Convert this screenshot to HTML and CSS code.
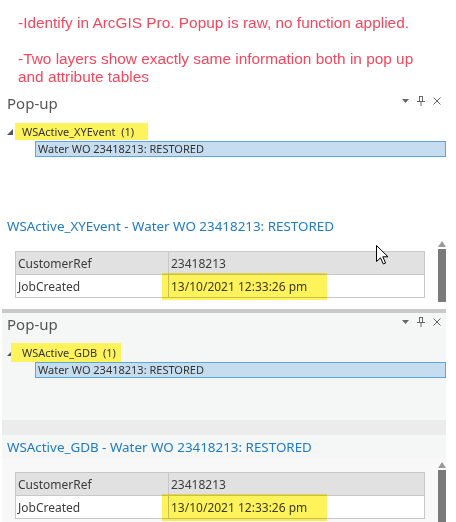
FILE: index.html
```html
<!DOCTYPE html>
<html lang="en">
<head>
    <meta charset="UTF-8">
    <title>Pop-up - WSActive layers</title>
    <link rel="stylesheet" href="styles.css">
</head>
<body>
    <div class="note">
        <p>-Identify in ArcGIS Pro. Popup is raw, no function applied.</p>
        <p>-Two layers show exactly same information both in pop up and attribute tables</p>
    </div>

    <!-- first layer: XY event layer -->
    <section class="pane">
        <div class="pane-head">
            <span class="pane-title">Pop-up</span>
            <span class="pane-tools">
                <svg width="7" height="4" viewBox="0 0 7 4"><path d="M0 0H7L3.5 4Z" fill="#666"/></svg>
                <svg width="8" height="10" viewBox="0 0 8 10"><path d="M2.5 0V5M5.5 0V5M2.5 0.5H5.5M0 5.5H8M4 5.5V10" stroke="#666" fill="none"/></svg>
                <svg width="8" height="8" viewBox="0 0 8 8"><path d="M0.5 0.5L7.5 7.5M7.5 0.5L0.5 7.5" stroke="#666" fill="none"/></svg>
            </span>
        </div>
        <div class="tree">
            <div class="tree-layer">
                <svg class="tree-toggle" width="6" height="6" viewBox="0 0 6 6"><path d="M6 0V6H0Z" fill="#555"/></svg>
                <span class="hl hl-xy">WSActive_XYEvent  (1)</span>
            </div>
            <div class="tree-feature">Water WO 23418213: RESTORED</div>
        </div>
    </section>
    <section class="detail">
        <div class="detail-band"></div>
        <div class="detail-title">WSActive_XYEvent - Water WO 23418213: RESTORED</div>
        <div class="detail-body">
            <div class="attr-wrap">
                <table class="attrs">
                    <tr class="head"><td class="key">CustomerRef</td><td>23418213</td></tr>
                    <tr><td class="key">JobCreated</td><td>13/10/2021 12:33:26 pm</td></tr>
                </table>
                <span class="mark"></span>
            </div>
            <div class="scrollbar"><svg width="8" height="6" viewBox="0 0 8 6"><path d="M4 0L8 6H0Z" fill="#999"/></svg><span class="thumb"></span></div>
            <svg class="cursor" width="13" height="20" viewBox="0 0 13 20"><path d="M0.5 0.5V16.5L4.5 12.8L7.3 19L9.6 18L6.8 11.8H12Z" fill="#fff" stroke="#000" stroke-linejoin="round"/></svg>
        </div>
    </section>

    <!-- second layer: geodatabase layer -->
    <section class="pane inactive">
        <div class="pane-head">
            <span class="pane-title">Pop-up</span>
            <span class="pane-tools">
                <svg width="7" height="4" viewBox="0 0 7 4"><path d="M0 0H7L3.5 4Z" fill="#666"/></svg>
                <svg width="8" height="10" viewBox="0 0 8 10"><path d="M2.5 0V5M5.5 0V5M2.5 0.5H5.5M0 5.5H8M4 5.5V10" stroke="#666" fill="none"/></svg>
                <svg width="8" height="8" viewBox="0 0 8 8"><path d="M0.5 0.5L7.5 7.5M7.5 0.5L0.5 7.5" stroke="#666" fill="none"/></svg>
            </span>
        </div>
        <div class="tree">
            <div class="tree-layer">
                <svg class="tree-toggle" width="6" height="6" viewBox="0 0 6 6"><path d="M6 0V6H0Z" fill="#555"/></svg>
                <span class="hl hl-gdb">WSActive_GDB  (1)</span>
            </div>
            <div class="tree-feature">Water WO 23418213: RESTORED</div>
        </div>
    </section>
    <section class="detail inactive">
        <div class="detail-band"></div>
        <div class="detail-title">WSActive_GDB - Water WO 23418213: RESTORED</div>
        <div class="detail-body">
            <div class="attr-wrap">
                <table class="attrs">
                    <tr class="head"><td class="key">CustomerRef</td><td>23418213</td></tr>
                    <tr><td class="key">JobCreated</td><td>13/10/2021 12:33:26 pm</td></tr>
                </table>
                <span class="mark"></span>
            </div>
            <div class="scrollbar"><svg width="8" height="6" viewBox="0 0 8 6"><path d="M4 0L8 6H0Z" fill="#999"/></svg><span class="thumb"></span></div>
        </div>
    </section>
</body>
</html>
```
FILE: styles.css
```css
body { margin: 0; background: #fff; font-family: "Noto Sans", sans-serif; color: #333; overflow: hidden; }

.note { height: 88px; box-sizing: border-box; padding: 14px 0 0 18px; width: 430px; font-family: "Liberation Sans", Arial, sans-serif; font-size: 15.4px; line-height: 18px; color: #f4475d; }
.note p { margin: 0 0 18px; }

.pane { margin-left: 2px; width: 444px; height: 111px; box-sizing: border-box; border-top: 4px solid #fff; }
.pane.inactive { border-top-color: #c9c9c9; background: #f5f6f6; }
.pane-head { height: 21px; display: flex; align-items: center; justify-content: space-between; padding: 0 5px; }
.pane-title { font-size: 15px; color: #555; }
.pane-tools { display: flex; align-items: center; gap: 8px; margin-bottom: 4px; }
.pane-tools svg { display: block; }

.tree { padding-top: 9px; }
.tree-layer { height: 19px; display: flex; align-items: center; }
.tree-toggle { margin: 0 2px 0 5px; }
.hl { background: #fff35c; font-size: 11px; white-space: pre; height: 19px; display: flex; align-items: center; box-sizing: border-box; color: #333; }
.hl-xy { padding: 0 14px 0 7px; height: 17px; }
.hl-gdb { padding: 0 5px 0 11px; margin-left: -4px; }
.tree-feature { margin-left: 33px; height: 16px; box-sizing: border-box; border: 1px solid #5aa7e0; background: #c6dcef; font-size: 11px; line-height: 14px; padding-left: 2px; color: #333; }

.detail { margin-left: 2px; width: 444px; height: 110px; }
.detail.inactive { height: auto; }
.detail-band { height: 15px; }
.detail.inactive .detail-band { background: #ececec; }
.detail-title { height: 23px; display: flex; align-items: center; padding-left: 5px; font-size: 13.4px; color: #1f7bc6; }
.detail.inactive .detail-title { background: #f5f6f6; }
.detail-body { position: relative; display: flex; padding-top: 4px; height: 68px; box-sizing: border-box; }
.detail.inactive .detail-body { background: #f8f8f8; height: 64px; overflow: hidden; }

.attr-wrap { position: relative; margin: 10px 0 0 13px; width: 412px; }
.attrs { border-collapse: collapse; width: 100%; font-size: 12px; color: #3c3c3c; }
.attrs td { border: 1px solid #c8c8c8; height: 22px; padding: 0 0 0 2px; background: #fff; }
.attrs tr.head td { background: #e1e1e1; }
.attrs td.key { width: 150px; }
.mark { position: absolute; left: 147px; top: 22px; width: 165px; height: 27px; background: #fff35c; mix-blend-mode: multiply; }

.scrollbar { margin-left: 13px; width: 8px; display: flex; flex-direction: column; align-items: center; gap: 2px; }
.scrollbar svg { display: block; }
.thumb { width: 8px; height: 53px; background: #7a7a7a; }

.cursor { position: absolute; left: 374px; top: 8px; }
```
